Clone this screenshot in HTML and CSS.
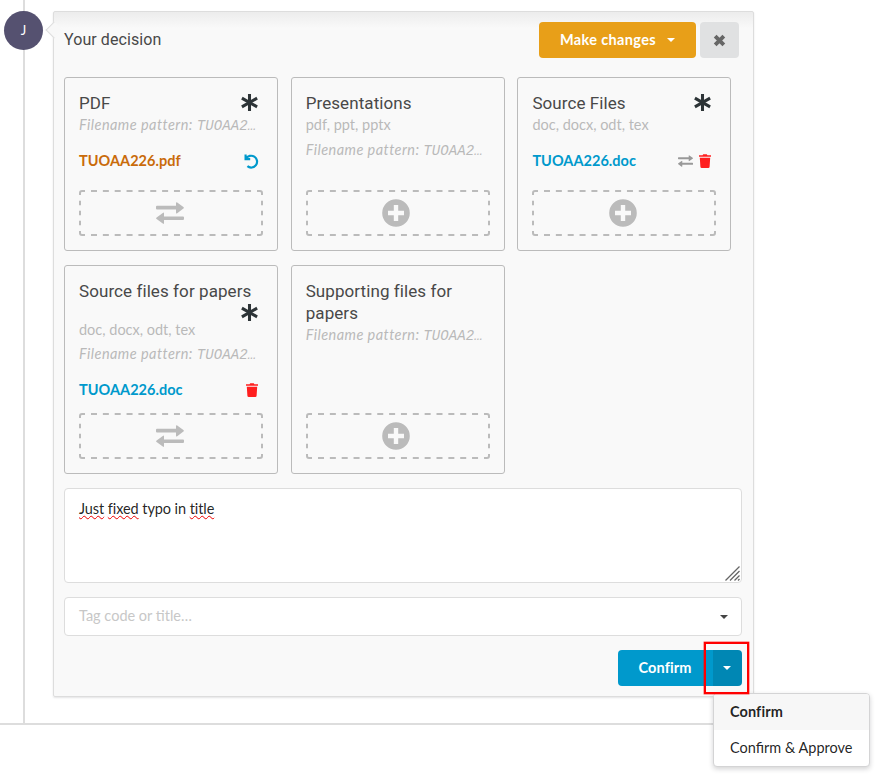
FILE: index.html
```html
<!DOCTYPE html>
<html lang="en">
<head>
<meta charset="utf-8">
<title>Your decision</title>
<link rel="stylesheet" href="styles.css">
</head>
<body>
<svg width="0" height="0" class="defs" aria-hidden="true">
  <symbol id="asterisk" viewBox="0 0 20 20"><path d="M10 1V19M2 5.4L18 14.6M18 5.4L2 14.6" stroke="currentColor" stroke-width="3.2" fill="none"/></symbol>
  <symbol id="exchange" viewBox="0 0 28 22"><path d="M1 3.8H20V1.2Q20 -.4 21.2 .6L27.4 5Q28.4 5.8 27.4 6.6L21.2 11.2Q20 12 20 10.6V7.5H1Q0 7.5 0 6.5V4.8Q0 3.8 1 3.8ZM27 14.4H8V11.4Q8 10 6.8 10.9L.6 15.4Q-.4 16.2 .6 17L6.8 21.6Q8 22.4 8 21V18.1H27Q28 18.1 28 17.1V15.4Q28 14.4 27 14.4Z" fill="currentColor"/></symbol>
  <symbol id="plus" viewBox="0 0 28 28"><path fill-rule="evenodd" d="M14 .2A13.8 13.8 0 1 0 14 27.8A13.8 13.8 0 1 0 14 .2ZM11.8 6H16.2V11.8H22V16.2H16.2V22H11.8V16.2H6V11.8H11.8Z" fill="currentColor"/></symbol>
  <symbol id="trash" viewBox="0 0 12 14"><path d="M0 1.2H3.6L4.2 .2H7.8L8.4 1.2H12V2.8H0ZM.8 3.8H11.2L10.6 12.8Q10.5 14 9.3 14H2.7Q1.5 14 1.4 12.8Z" fill="currentColor"/></symbol>
  <symbol id="undo" viewBox="0 0 15 15"><path d="M1.6 .6V5.1H6.2M2 4.8A5.9 5.9 0 1 1 3.4 12.2" stroke="currentColor" stroke-width="2.2" fill="none"/></symbol>
  <symbol id="close" viewBox="0 0 12 12"><path d="M2 2L10 10M10 2L2 10" stroke="currentColor" stroke-width="3.6" fill="none"/></symbol>
  <symbol id="dashes" viewBox="0 0 184 46"><g stroke="currentColor" stroke-width="2" fill="none"><path d="M12 1H172.1M12 45H172.1" stroke-dasharray="6 5.85"/><path d="M1 10.7V35.3M183 10.7V35.3" stroke-dasharray="4.6 5.4"/><path d="M1 5V3Q1 1 3 1H6M178 1H181Q183 1 183 3V5M1 41V43Q1 45 3 45H6M178 45H181Q183 45 183 43V41"/></g></symbol>
</svg>
<main class="timeline">
  <div class="avatar">J</div>
  <section class="panel">
    <header class="head">
      <h1>Your decision</h1>
      <button class="btn change"><span>Make changes</span><i class="caret"></i></button>
      <button class="btn close"><svg><use href="#close"/></svg></button>
    </header>
    <div class="cards">
      <article class="card">
        <div class="title"><h2>PDF</h2><svg class="req"><use href="#asterisk"/></svg></div>
        <p class="pattern"><span>Filename pattern: </span><code>TUOAA2…</code></p>
        <div class="file modified"><b>TUOAA226.pdf</b><svg class="undo"><use href="#undo"/></svg></div>
        <div class="drop"><svg class="outline"><use href="#dashes"/></svg><svg class="swap"><use href="#exchange"/></svg></div>
      </article>
      <article class="card">
        <div class="title"><h2>Presentations</h2></div>
        <p class="types">pdf, ppt, pptx</p>
        <p class="pattern spaced"><span>Filename pattern: </span><code>TUOAA2…</code></p>
        <div class="drop"><svg class="outline"><use href="#dashes"/></svg><svg class="add"><use href="#plus"/></svg></div>
      </article>
      <article class="card">
        <div class="title"><h2>Source Files</h2><svg class="req"><use href="#asterisk"/></svg></div>
        <p class="types">doc, docx, odt, tex</p>
        <div class="file"><b>TUOAA226.doc</b><svg class="replace"><use href="#exchange"/></svg><svg class="trash"><use href="#trash"/></svg></div>
        <div class="drop"><svg class="outline"><use href="#dashes"/></svg><svg class="add"><use href="#plus"/></svg></div>
      </article>
      <article class="card">
        <div class="title wrap"><h2>Source files for papers</h2><svg class="req"><use href="#asterisk"/></svg></div>
        <p class="types">doc, docx, odt, tex</p>
        <p class="pattern spaced"><span>Filename pattern: </span><code>TUOAA2…</code></p>
        <div class="file"><b>TUOAA226.doc</b><svg class="trash"><use href="#trash"/></svg></div>
        <div class="drop"><svg class="outline"><use href="#dashes"/></svg><svg class="swap"><use href="#exchange"/></svg></div>
      </article>
      <article class="card">
        <div class="title"><h2>Supporting files for papers</h2></div>
        <p class="pattern"><span>Filename pattern: </span><code>TUOAA2…</code></p>
        <div class="drop"><svg class="outline"><use href="#dashes"/></svg><svg class="add"><use href="#plus"/></svg></div>
      </article>
    </div>
    <div class="comment"><p><u>Just</u> <u>fixed</u> typo in <u>title</u></p>
      <svg class="grip" viewBox="0 0 15 15"><path d="M.5 14.5L14.5 .5M5 14.5L14.5 5M9.5 14.5L14.5 9.5M13 14.5L14.5 13" stroke="#666" stroke-width="1.3"/></svg>
    </div>
    <div class="tag"><span>Tag code or title…</span><i class="caret"></i></div>
    <div class="actions">
      <button class="btn confirm">Confirm</button>
      <div class="more"><button class="btn toggle"><i class="caret"></i></button>
        <div class="highlight"></div>
        <div class="menu"><div class="item selected">Confirm</div><div class="item">Confirm &amp; Approve</div></div>
      </div>
    </div>
  </section>
</main>
</body>
</html>
```
FILE: styles.css
```css
* { box-sizing: border-box; }
html, body { min-height: 784px; }
body { margin: 0; background: #fff; color: rgba(0,0,0,.87); font: 14.5px/20px Lato, "Liberation Sans", sans-serif; }
.defs { position: absolute; }
h1, h2, p { margin: 0; font-weight: 400; }
svg { display: block; flex: none; }
.timeline { position: relative; display: flex; align-items: flex-start; width: 754px; height: 725px; padding-top: 11px; border-bottom: 2px solid #ddd; }
.timeline::before { content: ""; position: absolute; left: 23px; top: 0; width: 2px; height: 723px; background: #ddd; }
.avatar { position: relative; width: 39px; height: 39px; margin: 0 10px 0 4px; border-radius: 50%; background: #555170; color: #fff; font-size: 13px; line-height: 39px; text-align: center; flex: none; }
.panel { position: relative; flex: none; width: 701px; height: 686px; padding: 10px 11px 0 10px; border: 1px solid #ddd; border-radius: 2px; background: linear-gradient(#ececec, #f9f9f9 16px); box-shadow: 0 1px 2px rgba(34,36,38,.12); }
.panel::before { content: ""; position: absolute; left: -6px; top: 12px; width: 11px; height: 11px; background: #f8f8f8; border: 1px solid #ddd; border-width: 0 0 1px 1px; transform: rotate(45deg); }
.head { display: flex; align-items: center; height: 36px; padding-right: 3px; gap: 4px; }
h1 { flex: 1; font: 16px/20px Roboto, sans-serif; letter-spacing: .08px; color: #484848; }
.btn { display: flex; align-items: center; justify-content: center; height: 36px; border: 0; padding: 0; border-radius: 4px; color: #fff; font: 700 14.5px/20px Lato, sans-serif; }
.change { width: 157px; gap: 11px; background: #e89f18; letter-spacing: .35px; }
.close { width: 39px; background: #e0e1e2; color: #666; }
.close svg { width: 13px; height: 13px; }
.caret { border: 4px solid transparent; border-top-color: currentColor; border-bottom: 0; }
.cards { display: grid; grid-template-columns: repeat(3, 214px); grid-template-rows: 174px 209px; gap: 14px 12.7px; margin-top: 19px; }
.card { display: flex; flex-direction: column; padding: 14px; border: 1px solid #bbb; border-radius: 3px; }
.title { display: flex; justify-content: space-between; margin-bottom: 1px; padding-right: 4px; }
.title.wrap { flex-wrap: wrap; }
.title.wrap .req { margin-left: auto; }
.title.wrap + .types { margin-top: -3px; }
.title.wrap ~ .spaced { margin-top: 4px; }
h2 { font: 17px/22px Roboto, sans-serif; letter-spacing: .08px; color: #484848; }
.req { width: 19px; height: 19px; margin-top: 1px; color: #2d3437; }
.types, .pattern { height: 20px; color: #b9b9b9; white-space: nowrap; }
.pattern { font-style: italic; }
.pattern span { letter-spacing: .44px; }
.pattern.spaced { margin-top: 5px; }
code { font: italic 14px/18px "Liberation Mono", monospace; letter-spacing: .1px; }
.file { display: flex; align-items: center; margin-top: 15px; height: 22px; padding-right: 5px; color: #0099cc; }
.file b { margin-right: auto; letter-spacing: .03px; }
.file.modified { padding-right: 4px; }
.modified b { color: #c96b0a; }
.undo { width: 15px; height: 15px; }
.replace { width: 15px; height: 12px; color: #999; margin-right: 6px; }
.trash { width: 12px; height: 14px; color: #ff1f1f; }
.drop { position: relative; display: flex; align-items: center; justify-content: center; height: 46px; margin-top: auto; color: #bbb; }
.outline { position: absolute; inset: 0; width: 184px; height: 46px; }
.swap { width: 28px; height: 22px; margin-right: 3px; }
.add { width: 28px; height: 28px; margin-right: 3px; }
.comment { position: relative; width: 678px; height: 95px; margin-top: 14px; padding: 10px 14px; background: #fff; border: 1px solid #ddd; border-radius: 4px; letter-spacing: -.08px; }
.comment u { text-decoration: underline wavy #e00 1px; text-underline-offset: 1px; text-decoration-skip-ink: none; }
.grip { position: absolute; right: 1px; bottom: 1px; width: 15px; height: 15px; }
.tag { display: flex; align-items: center; justify-content: space-between; height: 39px; margin-top: 14px; padding: 0 13px 1px 14px; background: #fff; border: 1px solid #ddd; border-radius: 4px; color: #c7c7c7; }
.tag .caret { margin-top: 1px; color: #444; }
.actions { display: flex; justify-content: flex-end; margin-top: 14px; }
.confirm { width: 95px; padding-right: 1px; background: #0099cc; border-radius: 4px 0 0 4px; letter-spacing: .1px; }
.more { position: relative; }
.toggle { width: 29px; padding-right: 1px; background: #0087b4; border-radius: 0 4px 4px 0; }
.highlight { position: absolute; left: -9px; top: -8px; width: 45px; height: 52px; border: 2px solid #f00; box-shadow: 0 0 0 .5px rgba(255,0,0,.5), 0 0 1px rgba(255,0,0,.6); z-index: 3; }
.menu { position: absolute; left: 0; top: 43px; width: 157px; height: 74px; border: 1px solid #d4d4d5; border-radius: 4px; background: #fff; box-shadow: 0 2px 5px rgba(34,36,38,.2); z-index: 2; overflow: hidden; }
.item { height: 36px; padding: 8px 16px; white-space: nowrap; }
.selected { background: #f7f7f7; font-weight: 700; letter-spacing: .1px; }
```
